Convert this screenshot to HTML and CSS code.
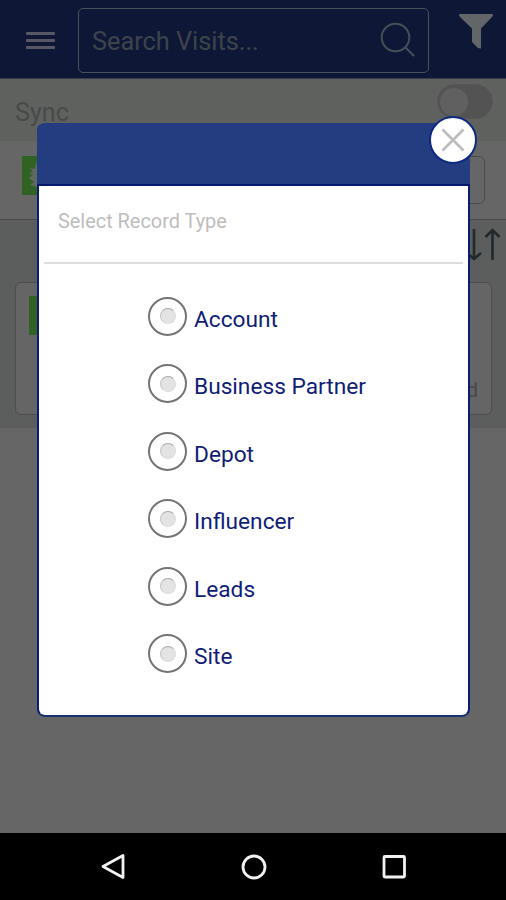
FILE: index.html
```html
<!DOCTYPE html>
<html lang="en">
<head>
<meta charset="utf-8">
<meta name="viewport" content="width=device-width">
<title>Visits</title>
<link rel="stylesheet" href="styles.css">
</head>
<body>
<div class="app">
  <header class="topbar">
    <div class="menu"><i></i><i></i><i></i></div>
    <div class="search">
      <span>Search Visits...</span>
      <svg width="36" height="36" viewBox="0 0 36 36" fill="none" stroke="#435057" stroke-width="2"><circle cx="15.500" cy="15.500" r="13.800"/><path d="M25.500 25.500L34 34"/></svg>
    </div>
    <svg class="filter" width="34" height="36" viewBox="0 0 34 36" fill="#636668"><path d="M0 0H34Q34 2 32.500 3.500L22 14.500V34.500L19 34L13 28V14.500L1.500 3.500Q0 2 0 0Z"/></svg>
  </header>
  <section class="sync"><span>Sync</span><div class="toggle"><i></i></div></section>
  <section class="bar">
    <div class="tile"><svg width="40" height="40" viewBox="0 0 40 40"><path d="M11 19L7 17L11 16L8 12L13 13L14 7L20 4L28 8L32 20L27 32L18 35L13 30L8 29L12 26L7 22Z" fill="#606860"/></svg></div>
    <div class="field"></div>
  </section>
  <section class="list">
    <svg class="sort" width="34" height="34" viewBox="0 0 34 34" fill="none" stroke="#20292e" stroke-width="2.600"><path d="M7 1V31M0 25L7 31L14 25M25.500 32V2M18.500 9L25.500 2L32.500 9"/></svg>
    <article class="card"><div class="tile"></div><span>Planned</span></article>
  </section>
  <main class="rest"></main>
  <nav class="nav">
    <svg width="28" height="28" viewBox="0 0 28 28"><path d="M4 13.500L24 2.500V24.500Z"/></svg>
    <svg width="28" height="28" viewBox="0 0 28 28"><circle cx="14" cy="14" r="11"/></svg>
    <svg width="28" height="28" viewBox="0 0 28 28"><rect x="4" y="3.500" width="20.500" height="20.500" rx="1"/></svg>
  </nav>
</div>
<div class="dialog">
  <div class="dialog-head"></div>
  <div class="dialog-title">Select Record Type</div>
  <div class="options">
    <div class="option"><i class="radio"></i><span>Account</span></div>
    <div class="option"><i class="radio"></i><span>Business Partner</span></div>
    <div class="option"><i class="radio"></i><span>Depot</span></div>
    <div class="option"><i class="radio"></i><span>Influencer</span></div>
    <div class="option"><i class="radio"></i><span>Leads</span></div>
    <div class="option"><i class="radio"></i><span>Site</span></div>
  </div>
  <div class="close"><svg width="24" height="24" viewBox="0 0 24 24" stroke="#bdbdbd" stroke-width="2.800"><path d="M1.500 1.500L22.500 22.500M22.500 1.500L1.500 22.500"/></svg></div>
</div>
</body>
</html>
```
FILE: styles.css
```css
* { box-sizing: border-box; }
body { margin: 0; font-family: Roboto, "Liberation Sans", sans-serif; }
svg { display: block; }
.app { width: 506px; height: 900px; display: flex; flex-direction: column; background: #666; overflow: hidden; }
.topbar { height: 79px; flex: none; display: flex; align-items: flex-start; background: #0e1836; border-bottom: 1px solid #343c50; }
.menu { margin: 32px 23px 0 26px; width: 29px; display: flex; flex-direction: column; gap: 4px; }
.menu i { height: 3px; border-radius: 1px; background: #565964; }
.search { width: 351px; height: 65px; margin-top: 7.500px; padding: 0 12px 0 12px; display: flex; align-items: center; justify-content: space-between; border: 1.500px solid #49525b; border-radius: 5px; color: #3d434a; font-size: 25.300px; }
.search span { padding: 2px 0 0 1px; }
.filter { margin: 14px 0 0 30px; }
.sync { height: 62px; flex: none; display: flex; align-items: flex-start; justify-content: space-between; padding: 5px 13px 0 15px; background: #5f615f; color: #484a49; font-size: 25.200px; }
.sync span { margin-top: 14px; line-height: 30px; }
.toggle { width: 56px; height: 35px; padding: 3px 2px; border-radius: 18px; background: #525352; border: 1px solid #565756; }
.toggle i { display: block; width: 28px; height: 28px; border-radius: 50%; background: #5f605f; }
.bar { height: 79px; flex: none; display: flex; justify-content: space-between; padding: 15px 21px 0 22px; background: #666; border-bottom: 1px solid #484948; }
.tile { width: 40px; height: 39px; background: #306323; }
.field { width: 80px; height: 48px; border: 1px solid #494a49; border-radius: 6px; }
.list { height: 208px; flex: none; padding: 8px 14px 0 15px; background: #5b5e5c; }
.sort { margin-left: auto; margin-right: -9px; }
.card { height: 133px; margin-top: 20px; padding: 13px; display: flex; justify-content: space-between; align-items: flex-start; border: 1px solid #4c4d4c; border-radius: 6px; background: #646564; color: #484948; font-size: 21px; }
.card span { align-self: flex-end; margin-bottom: -1px; }
.rest { flex: 1; }
.nav { height: 67px; flex: none; display: flex; justify-content: space-between; align-items: center; padding: 0 98px 0 99px; background: #000; }
.nav svg { fill: none; stroke: #f2f2f2; stroke-width: 2.800; stroke-linejoin: round; }
.dialog { position: absolute; left: 37px; top: 123px; width: 433px; height: 594px; background: #fff; border: 2px solid #0d1a7a; border-top-color: #243d80; border-bottom-color: #18316f; border-radius: 8px; }
.dialog-head { height: 62px; margin: -1px -2px 0; background: #243d80; border-bottom: 2px solid #07196b; border-radius: 6px 6px 0 0; }
.dialog-title { margin: 0 5px; height: 78px; padding: 24px 14px 0; line-height: 24px; border-bottom: 2px solid #ddd; color: #bdbdbd; font-size: 19.900px; }
.options { padding: 18.500px 0 0 109px; }
.option { height: 67.500px; display: flex; align-items: center; gap: 7px; color: #101d76; font-size: 22.700px; }
.option span { padding-top: 6px; }
.radio { width: 39px; height: 39px; display: grid; place-items: center; border: 2px solid #747474; border-radius: 50%; }
.radio::before { content: ""; width: 14px; height: 14px; border-radius: 50%; background: #e3e3e3; border: 1px solid #ddd; border-top-color: #aaa; border-left-color: #c4c4c4; }
.close { position: absolute; right: -9px; top: -9px; width: 48px; height: 48px; display: grid; place-items: center; background: #fff; border: 2.500px solid #0c2a82; border-radius: 50%; }
```
